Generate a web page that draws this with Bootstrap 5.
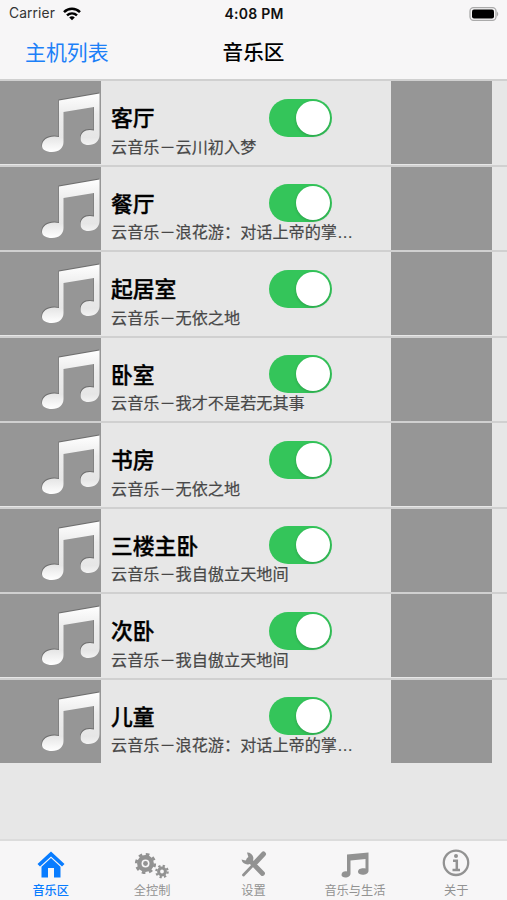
<!DOCTYPE html>
<html lang="zh-CN">
<head>
<meta charset="utf-8">
<meta name="viewport" content="width=device-width, initial-scale=1">
<title>音乐区</title>
<link href="https://cdn.jsdelivr.net/npm/bootstrap@5.3.0/dist/css/bootstrap.min.css" rel="stylesheet">
<style>
body{font-family:"Inter","Noto Sans CJK SC",sans-serif;background:#e7e7e7;color:#000;overflow:hidden}
.app{height:900px}
.top-area{height:79px;background:#f7f6f7}
.status{height:27px;font-size:13.8px;padding:0 8px 0 9px;display:grid;grid-template-columns:1fr auto 1fr}
.carrier{letter-spacing:.1px;color:#333}
.clock{font-weight:600;font-size:14px;letter-spacing:.25px;color:#111}
.title-bar{height:52px;padding:0 25px;display:grid;grid-template-columns:1fr auto 1fr;font-size:20.9px;line-height:52px}
.back{color:#1c80f8;text-decoration:none}
.page-title{font-weight:500;font-size:20.6px}
.zone{height:85.55px;border-top:2px solid #d0d0d0}
.art{width:101px;height:83px;background:#969696;flex:none}
.art svg{display:block}
.info{width:290px;padding:18px 0 0 10px}
.zone-name{font-size:21.8px;line-height:36px;font-family:"Noto Sans CJK SC",sans-serif;font-weight:500;-webkit-text-stroke:.35px #000}
.song{font-family:"Liberation Sans","Noto Sans CJK SC",sans-serif;font-size:16.15px;line-height:20px;color:#484848;white-space:nowrap;-webkit-text-stroke:.2px #484848}
.toggle{width:63px;height:38px;background:#34c55a;margin:-.5px 59.5px 0 0;padding:2px}
.knob{width:34px;height:34px;background:#fff;box-shadow:0 1px 3px #0003}
.tabs{height:61px;background:#f7f6f7;border-top:2px solid #dcdcdc}
.tab{width:101.4px;color:#929292;text-decoration:none;font-size:12.2px;line-height:16px;padding-top:4px}
.tab svg{display:block;height:36px;width:44px;margin-bottom:2px}
.tab.active{color:#087cff;font-weight:500}
</style>
<script src="https://cdn.jsdelivr.net/npm/bootstrap@5.3.0/dist/js/bootstrap.bundle.min.js"></script>
</head>
<body>
<svg width="0" height="0" class="position-absolute" aria-hidden="true">
<defs>
<linearGradient id="shine" x1="0" y1="0" x2="0" y2="1"><stop offset="0" stop-color="#fff"/><stop offset=".35" stop-color="#ececec"/><stop offset=".75" stop-color="#e6e6e6"/><stop offset="1" stop-color="#fff"/></linearGradient>
<path id="noteShape" d="M59 19.500 L99.500 12.500 V54 C99.500 60 95 64 88.500 64 C83.500 64 80.500 61.500 80.500 57.500 C80.500 51 86.500 47.500 94 49.500 V26 L63.500 31 V61 C63.500 67 59 71 52 71 C46 71 42 68.500 42 65 C42 58 50 54 59 56Z"/>
<symbol id="note" viewBox="0 0 101 83"><use href="#noteShape" fill="#6f6f6f" transform="translate(-.5 -1)"/><use href="#noteShape" fill="url(#shine)"/></symbol>
</defs>
</svg>
<div class="app d-flex flex-column">
<header class="top-area">
<div class="status align-items-center">
<div class="carrier d-flex align-items-center">Carrier<svg class="ms-2" width="18" height="14" viewBox="0 0 18 14" fill="none" stroke="#000" stroke-width="2.500"><path d="M1 5.200C5.500.7 12.500.7 17 5.200M4 8.400c2.900-2.700 7.100-2.700 10 0"/><path d="M9 13.200 6.200 10.400c1.500-1.500 4.100-1.500 5.600 0z" fill="#000" stroke="none"/></svg></div>
<div class="clock">4:08 PM</div>
<svg class="ms-auto" width="30" height="14" viewBox="0 0 30 14"><rect x="1" y=".7" width="26" height="12.600" rx="3.500" fill="none" stroke="#aaa" stroke-width="1.300"/><rect x="3" y="2.500" width="22" height="9" rx="2" fill="#000"/><path d="M28 4.500q2.500 2.500 0 5z" fill="#aaa"/></svg>
</div>
<nav class="title-bar"><a class="back" href="#">主机列表</a><div class="page-title">音乐区</div><span></span></nav>
</header>
<main class="flex-grow-1" id="zones"></main>
<nav class="tabs d-flex">
<a class="tab active d-flex flex-column align-items-center" href="#"><svg viewBox="0 0 44 36" fill="currentColor"><path d="M22 6.500 35.500 19 33 21.500 22 11.500 11 21.500 8.500 19z"/><path d="M22 13 31.500 21.800V32.500H25V23H19V32.500H12.500V21.800z"/></svg>音乐区</a>
<a class="tab d-flex flex-column align-items-center" href="#"><svg viewBox="0 0 44 36" fill="none" stroke="currentColor"><circle cx="15.500" cy="18.500" r="6.200" stroke-width="4.400"/><circle cx="15.500" cy="18.500" r="9.200" stroke-width="2.800" stroke-dasharray="3.613 3.613"/><circle cx="15.500" cy="18.500" r="2.400" fill="currentColor" stroke="none"/><circle cx="32" cy="26.500" r="3.400" stroke-width="3"/><circle cx="32" cy="26.500" r="5.700" stroke-width="2.200" stroke-dasharray="2.238 2.238"/></svg>全控制</a>
<a class="tab d-flex flex-column align-items-center" href="#"><svg viewBox="0 0 44 36" fill="none" stroke="currentColor" stroke-linecap="round"><path d="M18 14.500 31.500 28.500" stroke-width="4.800"/><path d="M32.500 9 25 17" stroke-width="5"/><path d="M24 18 12.500 30" stroke-width="2.800"/><path d="M16 7.500a6 6 0 1 1-5.500 7l4 1 3-3z" fill="currentColor" stroke="none"/></svg>设置</a>
<a class="tab d-flex flex-column align-items-center" href="#"><svg viewBox="0 0 44 36" fill="currentColor"><path d="M14 9.500 35.500 7.500V26C35.500 30.500 25.500 31 25 27C25 23.500 29 23 32.500 23.500V14L17.500 15.500V28.500C17.500 33.500 8.500 33.500 8.500 30C8.500 26.500 12 26 14 26.500z"/></svg>音乐与生活</a>
<a class="tab d-flex flex-column align-items-center" href="#"><svg viewBox="0 0 44 36" fill="none" stroke="currentColor"><circle cx="22" cy="17.800" r="12.200" stroke-width="2.300"/><circle cx="22" cy="11" r="2" fill="currentColor" stroke="none"/><path d="M19 15.800H22.800V25M18.500 25H26" stroke-width="2.500"/></svg>关于</a>
</nav>
</div>
<script>
const zones=[["客厅","云音乐－云川初入梦"],["餐厅","云音乐－浪花游：对话上帝的掌…"],["起居室","云音乐－无依之地"],["卧室","云音乐－我才不是若无其事"],["书房","云音乐－无依之地"],["三楼主卧","云音乐－我自傲立天地间"],["次卧","云音乐－我自傲立天地间"],["儿童","云音乐－浪花游：对话上帝的掌…"]];
document.getElementById("zones").innerHTML=zones.map(([name,song])=>`<section class="zone d-flex"><div class="art"><svg width="101" height="83"><use href="#note"/></svg></div><div class="info"><div class="d-flex justify-content-between"><div class="zone-name">${name}</div><div class="toggle rounded-pill d-flex justify-content-end"><div class="knob rounded-circle"></div></div></div><div class="song">${song}</div></div><div class="art"></div></section>`).join("");
</script>
</body>
</html>
